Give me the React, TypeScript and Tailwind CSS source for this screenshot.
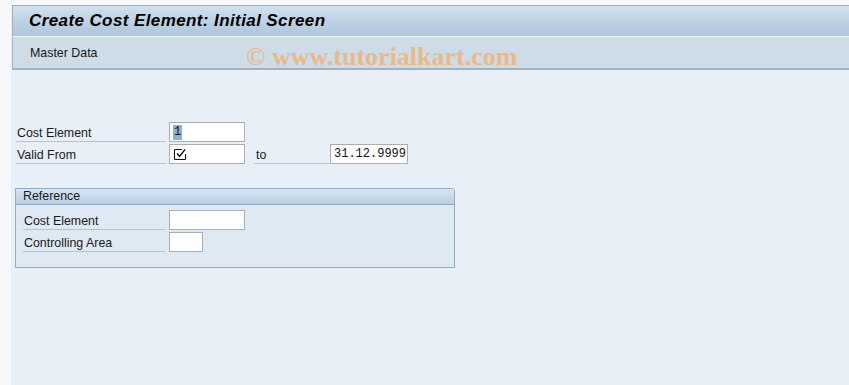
import React from 'react';

const font = "font-['Tahoma','DejaVu_Sans',sans-serif]";

const Field = ({ w, children }: { w: string; children?: React.ReactNode }) => (
  <div className={`${w} h-[20px] bg-white border border-[#a9aeb5] flex items-center px-[3px] text-[12px] text-[#111]`}>
    {children}
  </div>
);

const Label = ({ w, children }: { w: string; children: React.ReactNode }) => (
  <div className={`${w} h-[20px] border-b border-[#b7c2cd] flex items-end pb-0 pl-[1px] text-[12.4px] leading-[15px] text-[#1a1a1a] font-['Liberation_Sans',sans-serif]`}>
    {children}
  </div>
);

export default function App() {
  return (
    <div className={`w-[849px] h-[385px] bg-[#f7f8fb] pt-[5px] pl-[11px] overflow-hidden ${font}`}>
      <div className="h-[380px] bg-[#e8eff7] flex flex-col">
        {/* title */}
        <div className="h-[31px] ml-[1px] border-t border-l border-[#a3adbb] bg-gradient-to-b from-[#d1e0ed] to-[#adc5dc] flex items-center pl-[16px]">
          <span className="text-[17px] font-bold italic text-black font-['Liberation_Sans',sans-serif] tracking-[0.4px]">
            Create Cost Element: Initial Screen
          </span>
        </div>
        {/* toolbar */}
        <div className="h-[34px] ml-[1px] border-l border-b-2 border-[#a5b1bd] border-t border-t-[#eef3f8] bg-[#cedce7] flex items-center pl-[17px] pt-[2px] relative">
          <span className="text-[12.4px] text-[#1a1a1a] font-['Liberation_Sans',sans-serif]">Master Data</span>
          <span className="absolute left-[233px] top-[0px] text-[26px] font-bold text-[#e9b98a] font-['Liberation_Serif',serif]">
            © www.tutorialkart.com
          </span>
        </div>

        {/* main form */}
        <div className="pl-[5px] pt-[52px] flex flex-col gap-[2px]">
          <div className="flex items-center">
            <Label w="w-[150px]">Cost Element</Label>
            <div className="ml-[3px]">
              <Field w="w-[76px]">
                <span className="bg-[#8fb0d0] px-[1px] leading-[15px] font-['Liberation_Mono',monospace]">1</span>
              </Field>
            </div>
          </div>
          <div className="flex items-center">
            <Label w="w-[150px]">Valid From</Label>
            <div className="ml-[3px]">
              <Field w="w-[76px]">
                <svg width="14" height="14" viewBox="0 0 14 14">
                  <path d="M1.5 2.5 H9 M1.5 2.5 V12.5 H12.5 V7" stroke="#111" strokeWidth="1" fill="none" />
                  <path d="M4 6.5 L6.5 9.5 L12 2.5" stroke="#111" strokeWidth="1.4" fill="none" />
                </svg>
              </Field>
            </div>
            <div className="ml-[9px]">
              <Label w="w-[75px]">
                <span className="pl-[1px]">to</span>
              </Label>
            </div>
            <div className="ml-[1px]">
              <Field w="w-[78px]">
                <span className="font-['Liberation_Mono',monospace] text-[12px]">31.12.9999</span>
              </Field>
            </div>
          </div>
        </div>

        {/* reference group */}
        <div className="ml-[4px] mt-[24px] w-[440px] h-[80px] border border-[#8fabc8] rounded-tr-[3px] bg-[#dfe9f3] flex flex-col">
          <div className="h-[16px] border-b border-[#8fabc8] bg-gradient-to-b from-[#d8e5f1] to-[#b9cfe4] flex items-center pl-[7px]">
            <span className="text-[12.4px] leading-[15px] text-[#1a1a1a] font-['Liberation_Sans',sans-serif]">Reference</span>
          </div>
          <div className="pl-[7px] pt-[5px] flex flex-col gap-[2px]">
            <div className="flex items-center">
              <Label w="w-[142px]">Cost Element</Label>
              <div className="ml-[4px]">
                <Field w="w-[76px]" />
              </div>
            </div>
            <div className="flex items-center">
              <Label w="w-[142px]">Controlling Area</Label>
              <div className="ml-[4px]">
                <Field w="w-[34px]" />
              </div>
            </div>
          </div>
        </div>
      </div>
    </div>
  );
}
